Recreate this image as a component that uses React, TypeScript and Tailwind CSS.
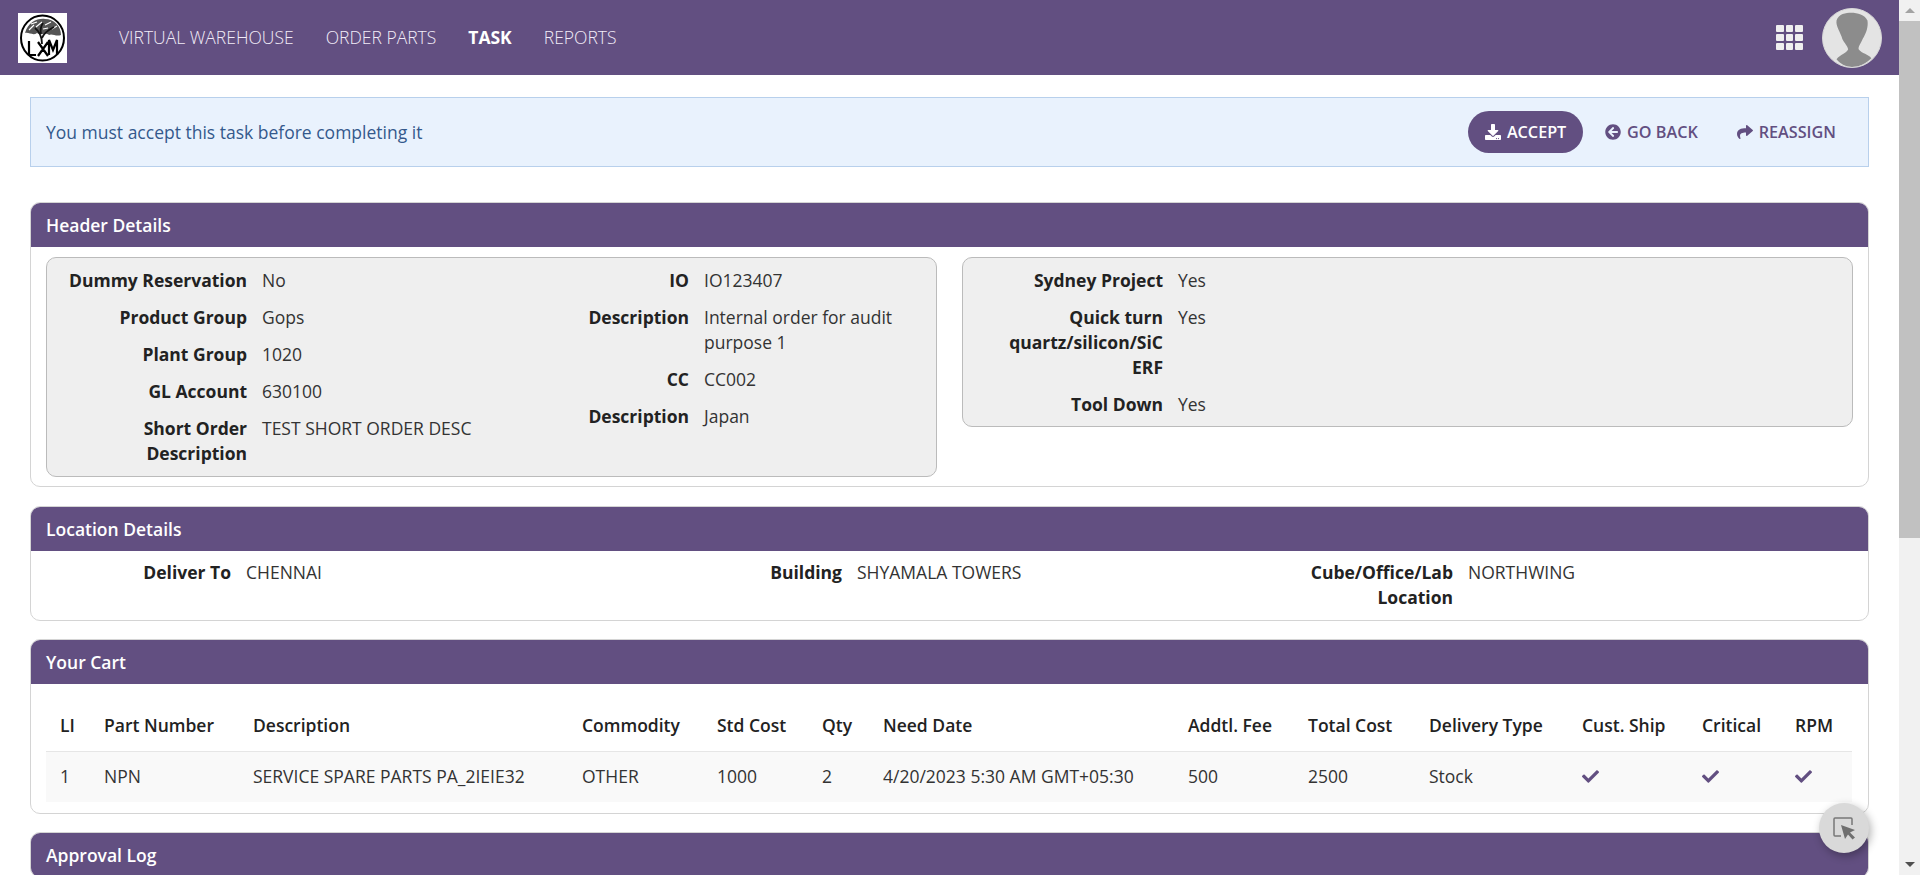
import { FaArrowCircleLeft, FaCheck, FaDownload, FaShare } from "react-icons/fa";

const purple = "bg-[#624f81]";

const Field = ({ label, value }: { label: string; value: string }) => (
  <div className="flex gap-[15px] pl-5 mb-3">
    <div className="w-[180px] shrink-0 text-right font-bold text-[#222]">{label}</div>
    <div className="flex-1 text-[#333]">{value}</div>
  </div>
);

const Card = ({ title, children, className }: { title: string; children?: React.ReactNode; className?: string }) => (
  <section className={`border border-[#d4d4d4] rounded-[10px] overflow-hidden ${className ?? ""}`}>
    <h2 className={`${purple} h-[44px] flex items-center px-[15px] font-semibold text-white`}>{title}</h2>
    {children}
  </section>
);

const columns = ["LI", "Part Number", "Description", "Commodity", "Std Cost", "Qty", "Need Date", "Addtl. Fee", "Total Cost", "Delivery Type", "Cust. Ship", "Critical", "RPM"];
const cells = ["1", "NPN", "SERVICE SPARE PARTS PA_2IEIE32", "OTHER", "1000", "2", "4/20/2023 5:30 AM GMT+05:30", "500", "2500", "Stock"];

const Logo = () => (
  <div className="w-[49px] h-[50px] bg-white flex items-center justify-center">
    <svg width="47" height="48" viewBox="0 0 47 48">
      <ellipse cx="23.5" cy="24" rx="21.5" ry="22.5" fill="none" stroke="#000" strokeWidth="2" />
      <path d="M6 19 C9 8 19 4 26 5 C35 5 42 12 42 21 C37 23 33 19 30 21 C26 18 22 22 18 19 C14 22 10 18 6 19Z" fill="#555" />
      <path d="M10 16 L15 11 M17 13 L23 8 M26 11 L32 8 M33 15 L38 12 M12 10 L18 8 M24 15 L29 14" stroke="#fff" strokeWidth="1.1" />
      <path d="M23 30 C23 22 21 18 16 14 M23 24 C25 19 29 16 35 13 M22 20 C21 16 22 12 24 9" fill="none" stroke="#111" strokeWidth="1.8" />
      <path d="M10 27 V41 H17 M19 28 L29 42 M29 28 L19 42 M30 41 V26 L34 36 L38 26 V41" fill="none" stroke="#000" strokeWidth="2.2" />
    </svg>
  </div>
);

const Avatar = () => (
  <div className="w-[60px] h-[60px] rounded-full bg-[#e4e4e4] overflow-hidden border border-[#d8d8d8]">
    <svg width="58" height="58" viewBox="0 0 60 60">
      <path d="M14 52 C18 47 24 46 26 42 C26 39 22 35 20 31 C18 24 13 18 14 12 C16 5 24 4 29 4 C36 4 43 6 46 12 C47 18 45 25 41 31 C39 36 36 39 37 42 C40 46 47 47 50 51 C44 57 37 60 30 60 C24 60 18 57 14 52Z" fill="#8c8c8c" />
    </svg>
  </div>
);

const GridIcon = () => (
  <div className="grid grid-cols-3 gap-[2px] w-[27px]">
    {Array.from({ length: 9 }).map((_, i) => (
      <span key={i} className="h-[7px] rounded-[1px] bg-[#efefef]" />
    ))}
  </div>
);

const Scrollbar = () => (
  <div className="w-[21px] shrink-0 bg-[#f1f1f1] flex flex-col items-center h-full">
    <div className="h-[21px] flex items-center justify-center">
      <span className="w-0 h-0 border-x-[5px] border-x-transparent border-b-[5px] border-b-[#a3a3a3]" />
    </div>
    <div className="w-full h-[517px] bg-[#c1c1c1]" />
    <div className="flex-1" />
    <div className="h-[21px] flex items-center justify-center">
      <span className="w-0 h-0 border-x-[5px] border-x-transparent border-t-[5px] border-t-[#505050]" />
    </div>
  </div>
);

export default function App() {
  return (
    <div className="h-[875px] w-[1920px] flex overflow-hidden relative bg-white text-[17.5px] leading-[25px] font-['Open_Sans',sans-serif]">
      <div className="w-[1899px] shrink-0">
        <header className={`${purple} h-[75px] flex items-center pl-[18px] pr-[17px]`}>
          <Logo />
          <nav className="flex items-center gap-[32px] ml-[52px] text-[#f2ecf8] font-light">
            <a>VIRTUAL WAREHOUSE</a>
            <a>ORDER PARTS</a>
            <a className="font-bold text-white">TASK</a>
            <a>REPORTS</a>
          </nav>
          <div className="ml-auto flex items-center gap-[19px]">
            <GridIcon />
            <Avatar />
          </div>
        </header>

        <main className="px-[30px] pt-[22px]">
          <div className="h-[70px] border border-[#b8d0ec] bg-[#e9f2fd] flex items-center pl-[15px] pr-[32px] text-[#34598c]">
            <span>You must accept this task before completing it</span>
            <div className="ml-auto flex items-center text-[16.2px] font-semibold text-[#624f81]">
              <button className={`${purple} text-white h-[42px] w-[115px] rounded-full flex items-center justify-center gap-[6px]`}>
                <FaDownload size={16} />
                ACCEPT
              </button>
              <button className="flex items-center gap-[6px] ml-[22px]">
                <FaArrowCircleLeft size={16} />
                GO BACK
              </button>
              <button className="flex items-center gap-[6px] ml-[39px]">
                <FaShare size={16} />
                REASSIGN
              </button>
            </div>
          </div>

          <Card title="Header Details" className="mt-[35px] h-[285px]">
            <div className="flex gap-[25px] px-[15px] pt-[10px]">
              <div className="w-[891px] h-[220px] border border-[#bbb] rounded-[10px] bg-[#efefef] pt-[10px] grid grid-cols-[442px_1fr]">
                <div>
                  <Field label="Dummy Reservation" value="No" />
                  <Field label="Product Group" value="Gops" />
                  <Field label="Plant Group" value="1020" />
                  <Field label="GL Account" value="630100" />
                  <Field label="Short Order Description" value="TEST SHORT ORDER DESC" />
                </div>
                <div>
                  <Field label="IO" value="IO123407" />
                  <Field label="Description" value="Internal order for audit purpose 1" />
                  <Field label="CC" value="CC002" />
                  <Field label="Description" value="Japan" />
                </div>
              </div>
              <div className="flex-1 h-[170px] border border-[#bbb] rounded-[10px] bg-[#efefef] pt-[10px]">
                <Field label="Sydney Project" value="Yes" />
                <Field label="Quick turn quartz/silicon/SiC ERF" value="Yes" />
                <Field label="Tool Down" value="Yes" />
              </div>
            </div>
          </Card>

          <Card title="Location Details" className="mt-[19px] h-[115px]">
            <div className="grid grid-cols-[611px_611px_1fr] pt-[9px]">
              <Field label="Deliver To" value="CHENNAI" />
              <Field label="Building" value="SHYAMALA TOWERS" />
              <Field label="Cube/Office/Lab Location" value="NORTHWING" />
            </div>
          </Card>

          <Card title="Your Cart" className="mt-[18px] h-[175px]">
            <div className="px-[15px] pt-[17px]">
              <table className="w-[1806px] table-fixed text-left">
                <colgroup>
                  <col className="w-[44px]" />
                  <col className="w-[149px]" />
                  <col className="w-[329px]" />
                  <col className="w-[135px]" />
                  <col className="w-[105px]" />
                  <col className="w-[61px]" />
                  <col className="w-[305px]" />
                  <col className="w-[120px]" />
                  <col className="w-[121px]" />
                  <col className="w-[153px]" />
                  <col className="w-[120px]" />
                  <col className="w-[93px]" />
                  <col className="w-[71px]" />
                </colgroup>
                <thead>
                  <tr className="h-[50px] border-b border-[#e6e6e6]">
                    {columns.map((c) => (
                      <th key={c} className="px-[14px] font-semibold text-[#222] whitespace-nowrap">{c}</th>
                    ))}
                  </tr>
                </thead>
                <tbody>
                  <tr className="h-[51px] bg-[#f9f9f9]">
                    {cells.map((c, i) => (
                      <td key={i} className="px-[14px] text-[#333] whitespace-nowrap">{c}</td>
                    ))}
                    {[0, 1, 2].map((i) => (
                      <td key={i} className="px-[14px] text-[#624f81]"><FaCheck size={17} /></td>
                    ))}
                  </tr>
                </tbody>
              </table>
            </div>
          </Card>

          <Card title="Approval Log" className="mt-[18px]" />
        </main>
      </div>
      <Scrollbar />

      <button className="absolute left-[1819px] top-[803px] w-[50px] h-[50px] rounded-full bg-[#d9d9d9] shadow-[2px_3px_8px_rgba(0,0,0,0.3)] flex items-center justify-center">
        <svg width="24" height="24" viewBox="0 0 24 24">
          <path d="M9 20 H3 a1 1 0 0 1 -1 -1 V3 a1 1 0 0 1 1 -1 H19 a1 1 0 0 1 1 1 V9" fill="none" stroke="#777" strokeWidth="1.5" />
          <path d="M9 9 L23 14 L18 16.5 L23 21.5 L20.5 23.5 L16 18.5 L13 23 Z" fill="#6f6f6f" />
        </svg>
      </button>
    </div>
  );
}
